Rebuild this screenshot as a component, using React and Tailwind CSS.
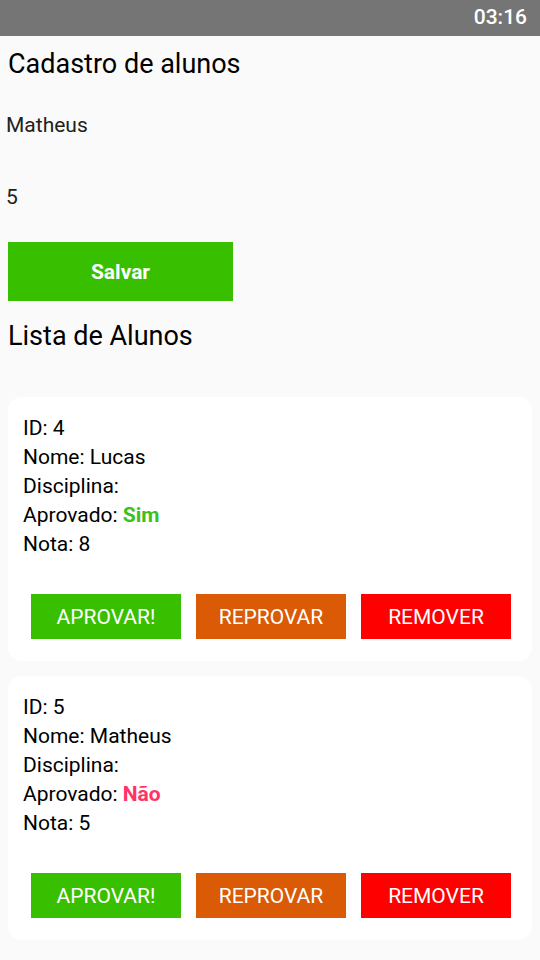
import React from "react";

const alunos = [
  { id: 4, nome: "Lucas", disciplina: "", aprovado: true, nota: 8 },
  { id: 5, nome: "Matheus", disciplina: "", aprovado: false, nota: 5 },
];

function AlunoCard({ aluno }) {
  return (
    <div className="bg-white rounded-[14px] pt-[17px] pb-[22px] pl-[15px] pr-[21px]">
      <div className="text-[21px] leading-[29px] text-black">
        <div>ID: {aluno.id}</div>
        <div>Nome: {aluno.nome}</div>
        <div>Disciplina: {aluno.disciplina}</div>
        <div>
          Aprovado:{" "}
          {aluno.aprovado ? (
            <span className="font-bold text-[#3cc01a]">Sim</span>
          ) : (
            <span className="font-bold text-[#ff3366]">Não</span>
          )}
        </div>
        <div>Nota: {aluno.nota}</div>
      </div>
      <div className="flex gap-[15px] mt-[35px] pl-[8px]">
        <button className="w-[150px] h-[45px] pt-[3px] bg-[#38bf00] text-white text-[21px] uppercase">
          Aprovar!
        </button>
        <button className="w-[150px] h-[45px] pt-[3px] bg-[#da5a05] text-white text-[21px] uppercase">
          Reprovar
        </button>
        <button className="w-[150px] h-[45px] pt-[3px] bg-[#ff0000] text-white text-[21px] uppercase">
          Remover
        </button>
      </div>
    </div>
  );
}

export default function App() {
  return (
    <div
      className="w-[540px] h-[960px] bg-[#fafafa] overflow-hidden"
      style={{ fontFamily: "Roboto, 'Liberation Sans', sans-serif" }}
    >
      {/* status bar */}
      <div className="h-[36px] bg-[#757575] flex items-center justify-end pr-[13px]">
        <span className="text-white text-[21px] font-medium">03:16</span>
      </div>

      <div className="px-[8px]">
        <h1 className="text-[27px] leading-[32px] text-black mt-[12px]">
          Cadastro de alunos
        </h1>

        <div className="h-[48px] mt-[22px] flex items-center text-[21px] text-[#212121] -ml-[2px]">
          Matheus
        </div>
        <div className="h-[48px] mt-[24px] flex items-center text-[21px] text-[#212121] -ml-[2px]">
          5
        </div>

        <button className="w-[225px] h-[59px] pt-[2px] bg-[#38bf00] text-white font-bold text-[21px] mt-[20px]">
          Salvar
        </button>

        <h2 className="text-[27px] leading-[32px] text-black mt-[19px]">
          Lista de Alunos
        </h2>

        <div className="mt-[45px] flex flex-col gap-[15px]">
          {alunos.map((a) => (
            <AlunoCard key={a.id} aluno={a} />
          ))}
        </div>
      </div>
    </div>
  );
}
